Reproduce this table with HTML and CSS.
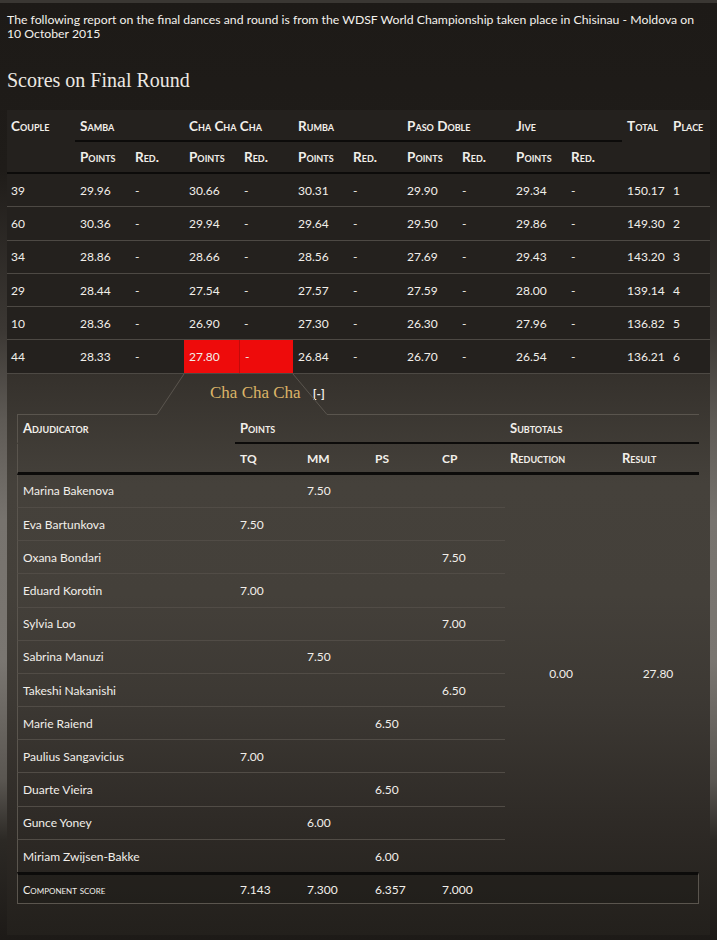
FILE: index.html
```html
<!DOCTYPE html>
<html>
<head>
<meta charset="utf-8">
<title>Scores on Final Round</title>
<link rel="stylesheet" href="styles.css">
</head>
<body>
<div class="page">
  <p class="intro">The following report on the final dances and round is from the WDSF World Championship taken place in Chisinau - Moldova on 10 October 2015</p>
  <h2 class="title">Scores on Final Round</h2>

  <table class="scores">
    <colgroup>
      <col style="width:68px"><col style="width:55px"><col style="width:54px"><col style="width:55px"><col style="width:54px"><col style="width:55px"><col style="width:54px"><col style="width:55px"><col style="width:54px"><col style="width:55px"><col style="width:56px"><col style="width:46px"><col style="width:42px">
    </colgroup>
    <thead>
      <tr class="h1">
        <th class="first">Couple</th>
        <th colspan="2" class="dance">Samba</th>
        <th colspan="2" class="dance">Cha Cha Cha</th>
        <th colspan="2" class="dance">Rumba</th>
        <th colspan="2" class="dance">Paso Doble</th>
        <th colspan="2" class="dance">Jive</th>
        <th>Total</th>
        <th>Place</th>
      </tr>
      <tr class="h2">
        <th class="first"></th>
        <th>Points</th><th>Red.</th>
        <th>Points</th><th>Red.</th>
        <th>Points</th><th>Red.</th>
        <th>Points</th><th>Red.</th>
        <th>Points</th><th>Red.</th>
        <th></th><th></th>
      </tr>
    </thead>
    <tbody>
      <tr><td class="first">39</td><td>29.96</td><td>-</td><td>30.66</td><td>-</td><td>30.31</td><td>-</td><td>29.90</td><td>-</td><td>29.34</td><td>-</td><td>150.17</td><td>1</td></tr>
      <tr><td class="first">60</td><td>30.36</td><td>-</td><td>29.94</td><td>-</td><td>29.64</td><td>-</td><td>29.50</td><td>-</td><td>29.86</td><td>-</td><td>149.30</td><td>2</td></tr>
      <tr><td class="first">34</td><td>28.86</td><td>-</td><td>28.66</td><td>-</td><td>28.56</td><td>-</td><td>27.69</td><td>-</td><td>29.43</td><td>-</td><td>143.20</td><td>3</td></tr>
      <tr><td class="first">29</td><td>28.44</td><td>-</td><td>27.54</td><td>-</td><td>27.57</td><td>-</td><td>27.59</td><td>-</td><td>28.00</td><td>-</td><td>139.14</td><td>4</td></tr>
      <tr><td class="first">10</td><td>28.36</td><td>-</td><td>26.90</td><td>-</td><td>27.30</td><td>-</td><td>26.30</td><td>-</td><td>27.96</td><td>-</td><td>136.82</td><td>5</td></tr>
      <tr><td class="first">44</td><td>28.33</td><td>-</td><td class="hl">27.80</td><td class="hl hl-r">-</td><td>26.84</td><td>-</td><td>26.70</td><td>-</td><td>26.54</td><td>-</td><td>136.21</td><td>6</td></tr>
    </tbody>
  </table>

  <div class="detail">
    <div class="tab">
      <svg class="tab-outline" width="682" height="41" viewBox="0 0 682 41" aria-hidden="true">
        <polyline points="0,40.5 140,40.5 167,0" fill="none" stroke="#5a554e" stroke-width="1"/>
        <polyline points="276,0 310,40.5 682,40.5" fill="none" stroke="#5a554e" stroke-width="1"/>
      </svg>
      <span class="tab-title">Cha Cha Cha</span>
      <span class="tab-toggle">[-]</span>
    </div>

    <table class="judges">
      <colgroup>
        <col style="width:218px"><col style="width:67px"><col style="width:68px"><col style="width:67px"><col style="width:68px"><col style="width:112px"><col style="width:82px">
      </colgroup>
      <thead>
        <tr class="jh1">
          <th class="name">Adjudicator</th>
          <th colspan="4" class="group">Points</th>
          <th colspan="2" class="group">Subtotals</th>
        </tr>
        <tr class="jh2">
          <th class="name"></th>
          <th class="caps">TQ</th><th class="caps">MM</th><th class="caps">PS</th><th class="caps">CP</th>
          <th>Reduction</th><th>Result</th>
        </tr>
      </thead>
      <tbody>
        <tr><td class="name">Marina Bakenova</td><td></td><td>7.50</td><td></td><td></td><td class="sub" rowspan="12">0.00</td><td class="sub" rowspan="12">27.80</td></tr>
        <tr><td class="name">Eva Bartunkova</td><td>7.50</td><td></td><td></td><td></td></tr>
        <tr><td class="name">Oxana Bondari</td><td></td><td></td><td></td><td>7.50</td></tr>
        <tr><td class="name">Eduard Korotin</td><td>7.00</td><td></td><td></td><td></td></tr>
        <tr><td class="name">Sylvia Loo</td><td></td><td></td><td></td><td>7.00</td></tr>
        <tr><td class="name">Sabrina Manuzi</td><td></td><td>7.50</td><td></td><td></td></tr>
        <tr><td class="name">Takeshi Nakanishi</td><td></td><td></td><td></td><td>6.50</td></tr>
        <tr><td class="name">Marie Raiend</td><td></td><td></td><td>6.50</td><td></td></tr>
        <tr><td class="name">Paulius Sangavicius</td><td>7.00</td><td></td><td></td><td></td></tr>
        <tr><td class="name">Duarte Vieira</td><td></td><td></td><td>6.50</td><td></td></tr>
        <tr><td class="name">Gunce Yoney</td><td></td><td>6.00</td><td></td><td></td></tr>
        <tr class="last"><td class="name">Miriam Zwijsen-Bakke</td><td></td><td></td><td>6.00</td><td></td></tr>
        <tr class="component"><td class="name comp-label">Component score</td><td>7.143</td><td>7.300</td><td>6.357</td><td>7.000</td><td></td><td class="end"></td></tr>
      </tbody>
    </table>
  </div>
</div>
</body>
</html>
```

FILE: styles.css
```css
* {
  box-sizing: border-box;
}

html,
body {
  margin: 0;
  padding: 0;
}

body {
  width: 717px;
  height: 940px;
  overflow: hidden;
  border-top: 3px solid #3a3733;
  font-family: Lato, "Open Sans", sans-serif;
  color: #f2efea;
  background: linear-gradient(to bottom,
    #1d1a17 0,
    #1f1c19 170px,
    #3c3834 330px,
    #5e5a55 420px,
    #77736e 520px,
    #7a7671 660px,
    #5a5651 780px,
    #2c2925 840px,
    #1d1a17 940px);
}

.page {
  margin-left: 7px;
  width: 703px;
}

.intro {
  margin: 10px 0 0;
  max-width: 700px;
  font-size: 12.25px;
  line-height: 14px;
  color: #f4f1ec;
}

.title {
  margin: 27px 0 0;
  font-family: "Liberation Serif", "Times New Roman", serif;
  font-weight: normal;
  font-size: 20px;
  line-height: 24px;
  color: #ece8e2;
}

/* main score table */
.scores {
  margin-top: 18px;
  width: 703px;
  table-layout: fixed;
  border-collapse: separate;
  border-spacing: 0;
  background: #24211e;
}

.scores th,
.scores td {
  padding: 0 5px;
  text-align: left;
  white-space: nowrap;
  vertical-align: middle;
}

.scores th {
  font-size: 13.5px;
  font-weight: bold;
  font-variant: small-caps;
  color: #f2efea;
}

.scores .first {
  padding-left: 4px;
}

.scores .h1 th {
  height: 32px;
  padding-top: 2px;
  border-bottom: 2px solid transparent;
}

.scores .h1 th.dance {
  border-bottom-color: #0c0b0a;
}

.scores .h2 th {
  height: 32px;
  border-bottom: 2px solid #0c0b0a;
}

.scores td {
  height: 33.3px;
  font-size: 12px;
  border-bottom: 1px solid #4d4944;
}

.scores td.hl {
  background: #ee0b0b;
}

.scores td.hl-r {
  border-left: 1px solid #c40a0a;
}

/* detail panel */
.detail {
  padding: 0 11px 31px 10px;
  background: linear-gradient(to bottom,
    #35312c 0,
    #45413b 110px,
    #44403a 220px,
    #3c3833 330px,
    #2e2a26 450px,
    #23201c 560px);
}

.tab {
  position: relative;
  height: 41px;
  display: flex;
  align-items: flex-start;
  padding: 9px 0 0 193px;
}

.tab-outline {
  position: absolute;
  left: 0;
  top: 0;
}

.tab-title {
  font-family: "Liberation Serif", "Times New Roman", serif;
  font-size: 17px;
  line-height: 20px;
  color: #dcb468;
}

.tab-toggle {
  margin-left: 12px;
  margin-top: 4px;
  font-size: 12px;
  line-height: 14px;
  font-weight: bold;
  color: #f2efea;
}

.judges {
  width: 682px;
  table-layout: fixed;
  border-collapse: separate;
  border-spacing: 0;
}

.judges th,
.judges td {
  padding: 0 5px;
  text-align: left;
  white-space: nowrap;
  vertical-align: middle;
  font-size: 12px;
}

.judges .name {
  border-left: 1px solid #5a554e;
}

.judges th {
  font-size: 13px;
  font-weight: bold;
  font-variant: small-caps;
  color: #f2efea;
}

.judges th.caps {
  font-size: 12px;
  font-variant: normal;
}

.judges .jh1 th {
  height: 29px;
  border-bottom: 2px solid transparent;
}

.judges .jh1 th.group {
  border-bottom-color: #0c0b0a;
}

.judges .jh2 th {
  height: 31px;
  padding-top: 1px;
  border-bottom: 3px solid #0c0b0a;
}

.judges td {
  height: 33.2px;
  border-bottom: 1px solid #514c46;
}

.judges .last td {
  height: 32.5px;
  border-bottom: none;
}

.judges td.sub {
  text-align: center;
  border-bottom: none;
}

.judges .component td {
  height: 32px;
  border-top: 3px solid #0c0b0a;
  border-bottom: 1px solid #5a554e;
  background: rgba(20, 18, 16, 0.25);
}

.judges .component td.end {
  border-right: 1px solid #5a554e;
}

.judges .comp-label {
  font-size: 11px;
  font-variant: small-caps;
}
```
